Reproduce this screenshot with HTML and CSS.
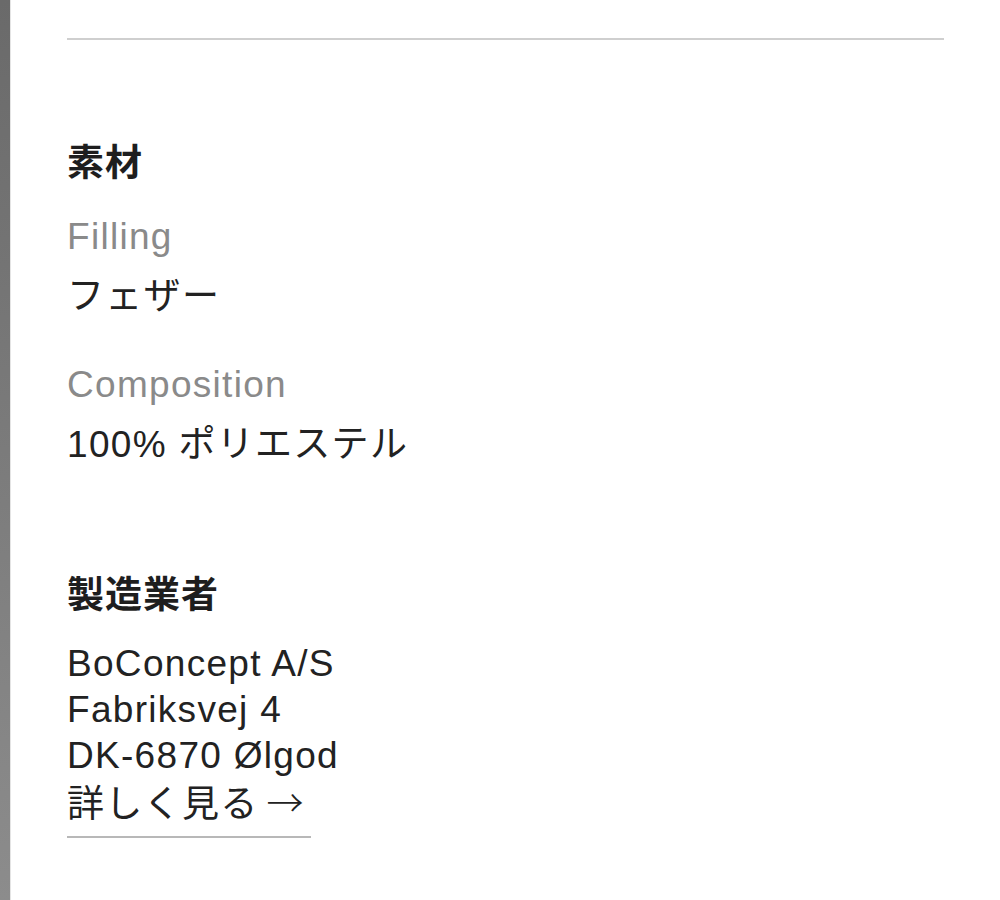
FILE: index.html
```html
<!DOCTYPE html>
<html lang="ja">
<head>
<meta charset="utf-8">
<title>素材</title>
<link rel="stylesheet" href="styles.css">
</head>
<body>
<div class="page">
  <div class="side-bar"></div>
  <main class="content">
    <hr class="divider">
    <section class="block block-material">
      <h2 class="block-title">素材</h2>
      <dl class="spec">
        <dt class="spec-label">Filling</dt>
        <dd class="spec-value">フェザー</dd>
        <dt class="spec-label spec-label-next">Composition</dt>
        <dd class="spec-value">100% ポリエステル</dd>
      </dl>
    </section>
    <section class="block block-maker">
      <h2 class="block-title">製造業者</h2>
      <address class="address">
        <span class="address-line">BoConcept A/S</span>
        <span class="address-line">Fabriksvej 4</span>
        <span class="address-line">DK-6870 Ølgod</span>
      </address>
      <a class="more-link" href="#">詳しく見る<span class="more-arrow">→</span></a>
    </section>
  </main>
</div>
</body>
</html>
```

FILE: styles.css
```css
html, body {
  margin: 0;
  padding: 0;
  background: #ffffff;
}

body {
  font-family: "Liberation Sans", "Noto Sans CJK JP", sans-serif;
  color: #222222;
}

.page {
  display: flex;
  min-height: 900px;
}

.side-bar {
  flex: 0 0 10px;
  background: linear-gradient(to bottom, #6a6a6a, #8c8c8c);
  border-right: 1px solid #e4e4e4;
}

.content {
  flex: 1;
  padding: 38px 56px 0 56px;
}

.divider {
  margin: 0;
  border: 0;
  height: 2px;
  background: #cfcfcf;
}

.block-title {
  margin: 0;
  font-family: "Noto Sans CJK JP", sans-serif;
  font-size: 37px;
  line-height: 46px;
  font-weight: 700;
  letter-spacing: 1px;
  color: #1e1e1e;
}

.block-material {
  margin-top: 97px;
}

.spec {
  margin: 31px 0 0 0;
}

.spec-label {
  font-size: 37px;
  line-height: 46px;
  letter-spacing: 1.3px;
  color: #8a8a8a;
}

.spec-label-next {
  margin-top: 42px;
}

.spec-value {
  margin: 14px 0 0 0;
  font-size: 37px;
  line-height: 46px;
  letter-spacing: 1.3px;
  color: #222222;
}

.block-maker {
  margin-top: 101px;
}

.address {
  margin-top: 26px;
  font-style: normal;
  display: flex;
  flex-direction: column;
}

.address-line {
  font-size: 37px;
  line-height: 46px;
  letter-spacing: 1.3px;
}

.more-link {
  display: inline-block;
  margin-top: 2px;
  font-size: 37px;
  line-height: 46px;
  letter-spacing: 1.3px;
  color: #222222;
  text-decoration: none;
  padding-bottom: 8px;
  padding-right: 6px;
  border-bottom: 2px solid #b8b8b8;
}

.more-arrow {
  display: inline-block;
  margin-left: 8px;
  font-family: "Noto Sans CJK JP", sans-serif;
  font-weight: 300;
  line-height: 40px;
}
```
